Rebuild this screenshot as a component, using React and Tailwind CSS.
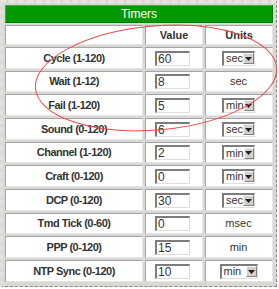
import React from 'react';

// Timers settings table with red annotation ellipse

const rows = [
  { label: 'Cycle (1-120)', value: '60', unit: 'sec', select: true, h: 'h-[22px]' },
  { label: 'Wait (1-12)', value: '8', unit: 'sec', select: false, h: 'h-[21px]' },
  { label: 'Fail (1-120)', value: '5', unit: 'min', select: true, h: 'h-[22px]' },
  { label: 'Sound (0-120)', value: '6', unit: 'sec', select: true, h: 'h-[22px]' },
  { label: 'Channel (1-120)', value: '2', unit: 'min', select: true, h: 'h-[21px]' },
  { label: 'Craft (0-120)', value: '0', unit: 'min', select: true, h: 'h-[22px]' },
  { label: 'DCP (0-120)', value: '30', unit: 'sec', select: true, h: 'h-[22px]' },
  { label: 'Tmd Tick (0-60)', value: '0', unit: 'msec', select: false, h: 'h-[21px]' },
  { label: 'PPP (0-120)', value: '15', unit: 'min', select: false, h: 'h-[22px]' },
  { label: 'NTP Sync (0-120)', value: '10', unit: 'min', select: true, h: 'h-[22px]', wide: true },
];

const cell =
  'bg-white border border-t-[#a4a4a4] border-l-[#a4a4a4] border-b-[#e6e6e6] border-r-[#e6e6e6] flex items-center justify-center';

const FakeInput = ({ value }) => (
  <div className="w-[35px] h-[15px] bg-white border-t-2 border-l-2 border-b border-r border-t-[#7c7c7c] border-l-[#7c7c7c] border-b-[#dedede] border-r-[#dedede] flex items-center pl-[1px] text-[12px] leading-none text-[#333]">
    {value}
  </div>
);

const FakeSelect = ({ unit, wide }) => (
  <div
    className={`${wide ? 'w-[38px]' : 'w-[33px]'} h-[15px] bg-white border-t-2 border-l-2 border-b border-r border-t-[#7c7c7c] border-l-[#7c7c7c] border-b-[#dedede] border-r-[#dedede] flex items-center justify-between text-[11px] leading-none text-[#333]`}
  >
    <span className="pl-[2px]">{unit}</span>
    <span className="w-[11px] h-[11px] bg-[#d4d0c8] border border-t-[#f4f4f4] border-l-[#f4f4f4] border-b-[#808080] border-r-[#808080] flex items-center justify-center">
      <svg width="7" height="4" viewBox="0 0 7 4">
        <path d="M0 0h7L3.5 4z" fill="#222" />
      </svg>
    </span>
  </div>
);

export default function App() {
  return (
    <div className="relative w-[279px] h-[289px] bg-white font-['Liberation_Sans',Arial,sans-serif]">
      <div className="w-[277px] h-[287px] bg-[#dad8d4] border-l-[3px] border-t-[3px] border-l-[#e2e0dc] border-t-[#e6e4e0] border-r border-b border-dashed border-r-[#8a8a8a] border-b-[#8a8a8a] p-[2px]">
        <div className="grid grid-cols-[138px_58px_68px] gap-[2px]">
          <div className="col-span-3 h-[18px] bg-[#009a00] border border-t-[#3cb03c] border-l-[#3cb03c] border-b-[#007a00] border-r-[#007a00] flex items-center justify-center text-white text-[12px]">
            Timers
          </div>

          <div className={`${cell} h-[20px]`} />
          <div className={`${cell} h-[20px] text-[11px] font-bold text-[#333]`}>Value</div>
          <div className={`${cell} h-[20px] text-[11px] font-bold text-[#333]`}>Units</div>

          {rows.map((r) => (
            <React.Fragment key={r.label}>
              <div className={`${cell} ${r.h} text-[11px] font-bold tracking-[-0.5px] text-[#333]`}>
                {r.label}
              </div>
              <div className={`${cell} ${r.h} pr-[3px]`}>
                <FakeInput value={r.value} />
              </div>
              <div className={`${cell} ${r.h} pr-[1px]`}>
                {r.select ? (
                  <FakeSelect unit={r.unit} wide={r.wide} />
                ) : (
                  <span className="text-[11px] text-[#333]">{r.unit}</span>
                )}
              </div>
            </React.Fragment>
          ))}
        </div>
      </div>

      {/* red annotation ellipse */}
      <svg className="absolute left-0 top-0 pointer-events-none" width="279" height="289">
        <ellipse
          cx="156"
          cy="78"
          rx="121"
          ry="52"
          transform="rotate(-5 156 78)"
          fill="none"
          stroke="#f04a4a"
          strokeWidth="1"
        />
      </svg>
    </div>
  );
}
